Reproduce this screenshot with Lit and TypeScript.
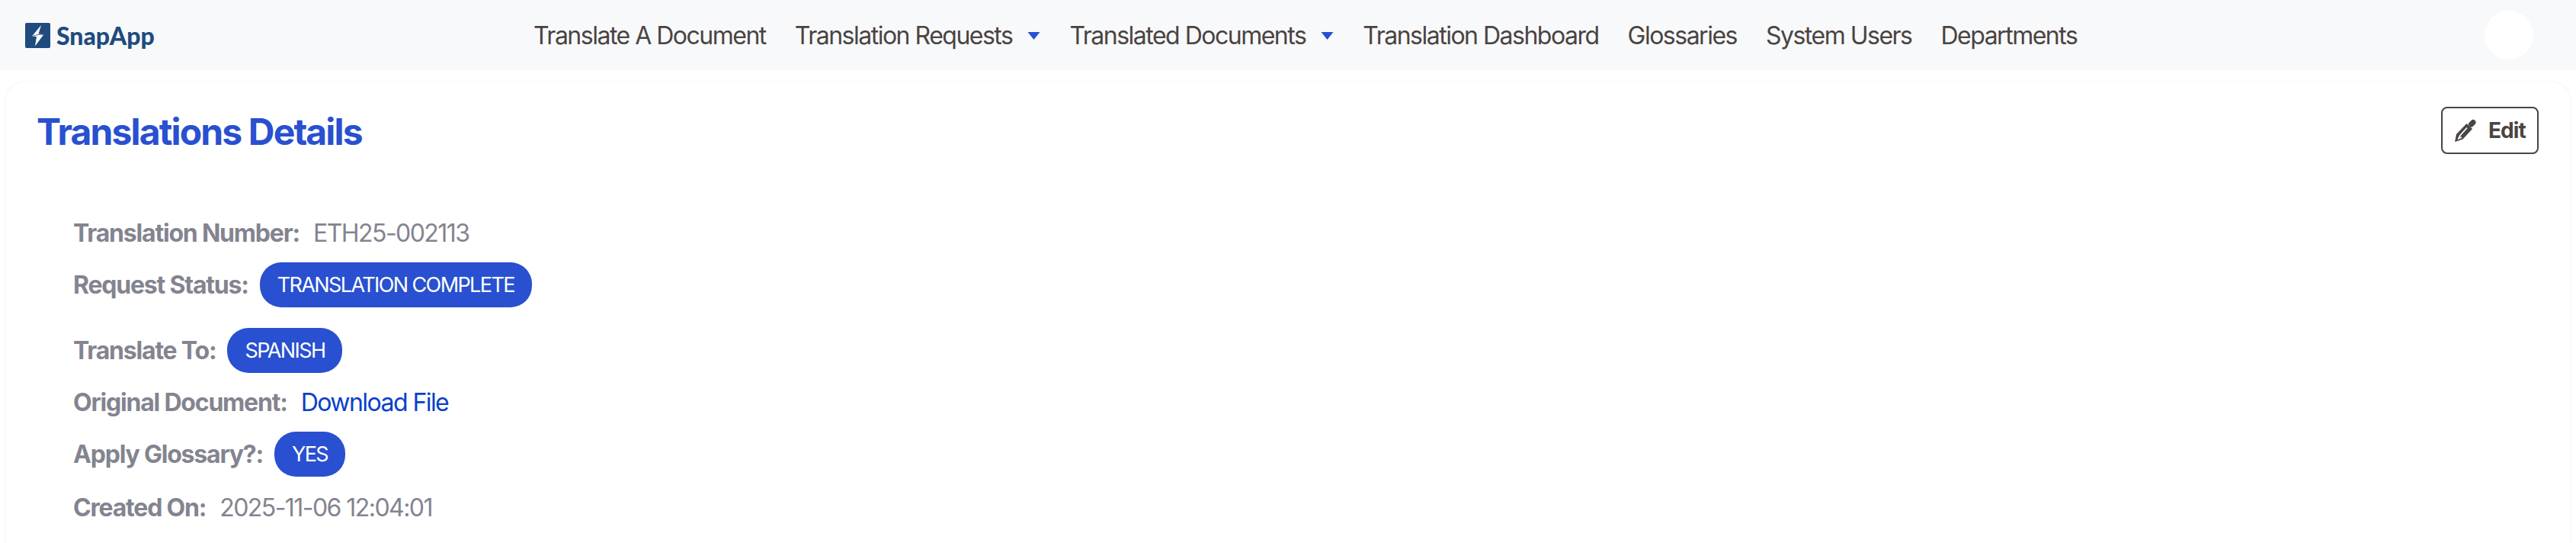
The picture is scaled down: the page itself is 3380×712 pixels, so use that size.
import { LitElement, html, css } from "lit";
import { customElement } from "lit/decorators.js";

const caret = html`<svg class="caret" viewBox="0 0 16 10" aria-hidden="true"><path d="M0 0H16L8 10Z"></path></svg>`;

@customElement("app-root")
export class AppRoot extends LitElement {
  static styles = css`
    :host { display: block; height: 712px; overflow: hidden; background: #fff; font-family: Inter, "Liberation Sans", sans-serif; color: #4a4442; }
    header { height: 92px; background: #f8f9fb; display: flex; align-items: center; padding: 0 56px 0 33px; box-sizing: border-box; }
    .brand { display: flex; align-items: center; gap: 8px; color: #1f4b7f; font-family: Lato, sans-serif; font-weight: 900; font-size: 32px; width: 667px; flex: none; }
    .logo { width: 33px; height: 33px; flex: none; }
    nav { display: flex; align-items: center; gap: 38px; flex: 1; font-size: 32px; letter-spacing: -1.5px; }
    .item { display: flex; align-items: center; gap: 20px; white-space: nowrap; }
    .caret { width: 17px; height: 10px; fill: #2850d0; margin-top: 2px; }
    .avatar { width: 64px; height: 64px; border-radius: 50%; background: #fff; flex: none; }
    main { margin: 16px 8px 0; padding: 36px 40px 0; background: #fff; border-radius: 24px; box-shadow: 0 0 4px rgba(40, 50, 80, 0.07); height: 620px; box-sizing: border-box; }
    .head { display: flex; justify-content: space-between; align-items: flex-start; height: 58px; }
    h1 { margin: 0; font-size: 48px; line-height: 58px; font-weight: 700; color: #2850d0; letter-spacing: -1.85px; }
    .edit { display: flex; align-items: center; gap: 16px; width: 128px; height: 62px; box-sizing: border-box; border: 2px solid #4a4442; border-radius: 8px; padding: 0 16px; margin: -4px 1px 0 0; background: #fff; color: #4a4442; font: 700 28px Inter, sans-serif; letter-spacing: -0.9px; }
    .edit svg { width: 28px; height: 30px; flex: none; }
    .rows { margin: 83px 0 0 48px; display: flex; flex-direction: column; font-size: 32px; color: #83848f; letter-spacing: -1.2px; }
    .row { display: flex; align-items: center; gap: 15px; height: 40px; white-space: nowrap; }
    .row b { font-weight: 700; }
    .row > span:not(.pill), .row a { letter-spacing: -1.55px; margin-left: 3px; }
    .row a { color: #0b3fc9; text-decoration: none; }
    .pill { display: flex; align-items: center; height: 59px; padding: 0 23px; border-radius: 28px; background: #2850d0; color: #fff; font-size: 27px; letter-spacing: -1.6px; }
    .r2 { margin-top: 28px; }
    .r3 { margin-top: 46px; }
    .r4 { margin-top: 28px; }
    .r5 { margin-top: 30px; }
  `;
  render() {
    return html`
      <header>
        <div class="brand">
          <svg class="logo" viewBox="0 0 33 33" aria-hidden="true">
            <rect width="33" height="33" rx="2" fill="#1f4b7f"></rect>
            <path d="M21 3 9 17.500l6 .5-2 12.500L24.500 15 17.500 14.500z" fill="#fff"></path>
            <path d="M10 17.500C14 15.500 19 15 24 15.500" fill="none" stroke="#1f4b7f" stroke-width="0.8"></path>
          </svg>
          <span>SnapApp</span>
        </div>
        <nav>
          <span class="item">Translate A Document</span>
          <span class="item">Translation Requests ${caret}</span>
          <span class="item">Translated Documents ${caret}</span>
          <span class="item">Translation Dashboard</span>
          <span class="item">Glossaries</span>
          <span class="item">System Users</span>
          <span class="item">Departments</span>
        </nav>
        <div class="avatar"></div>
      </header>
      <main>
        <div class="head">
          <h1>Translations Details</h1>
          <button class="edit">
            <svg viewBox="0 0 28 30" aria-hidden="true">
              <path d="M15.500 6 23 13 10.500 26.500 0 30 2 20z" fill="#4a4442"></path>
              <path d="M16 11.500 7 21.500M7 21.500 5 25.500l4-1.500" fill="none" stroke="#fff" stroke-width="1.800"></path>
              <path d="M21.500 7 24 4.500" fill="none" stroke="#4a4442" stroke-width="7" stroke-linecap="round"></path>
            </svg>
            Edit
          </button>
        </div>
        <div class="rows">
          <div class="row"><b>Translation Number:</b><span>ETH25-002113</span></div>
          <div class="row r2"><b>Request Status:</b><span class="pill">TRANSLATION COMPLETE</span></div>
          <div class="row r3"><b>Translate To:</b><span class="pill">SPANISH</span></div>
          <div class="row r4"><b>Original Document:</b><a href="#">Download File</a></div>
          <div class="row r4"><b>Apply Glossary?:</b><span class="pill">YES</span></div>
          <div class="row r5"><b>Created On:</b><span>2025-11-06 12:04:01</span></div>
        </div>
      </main>
    `;
  }
}
